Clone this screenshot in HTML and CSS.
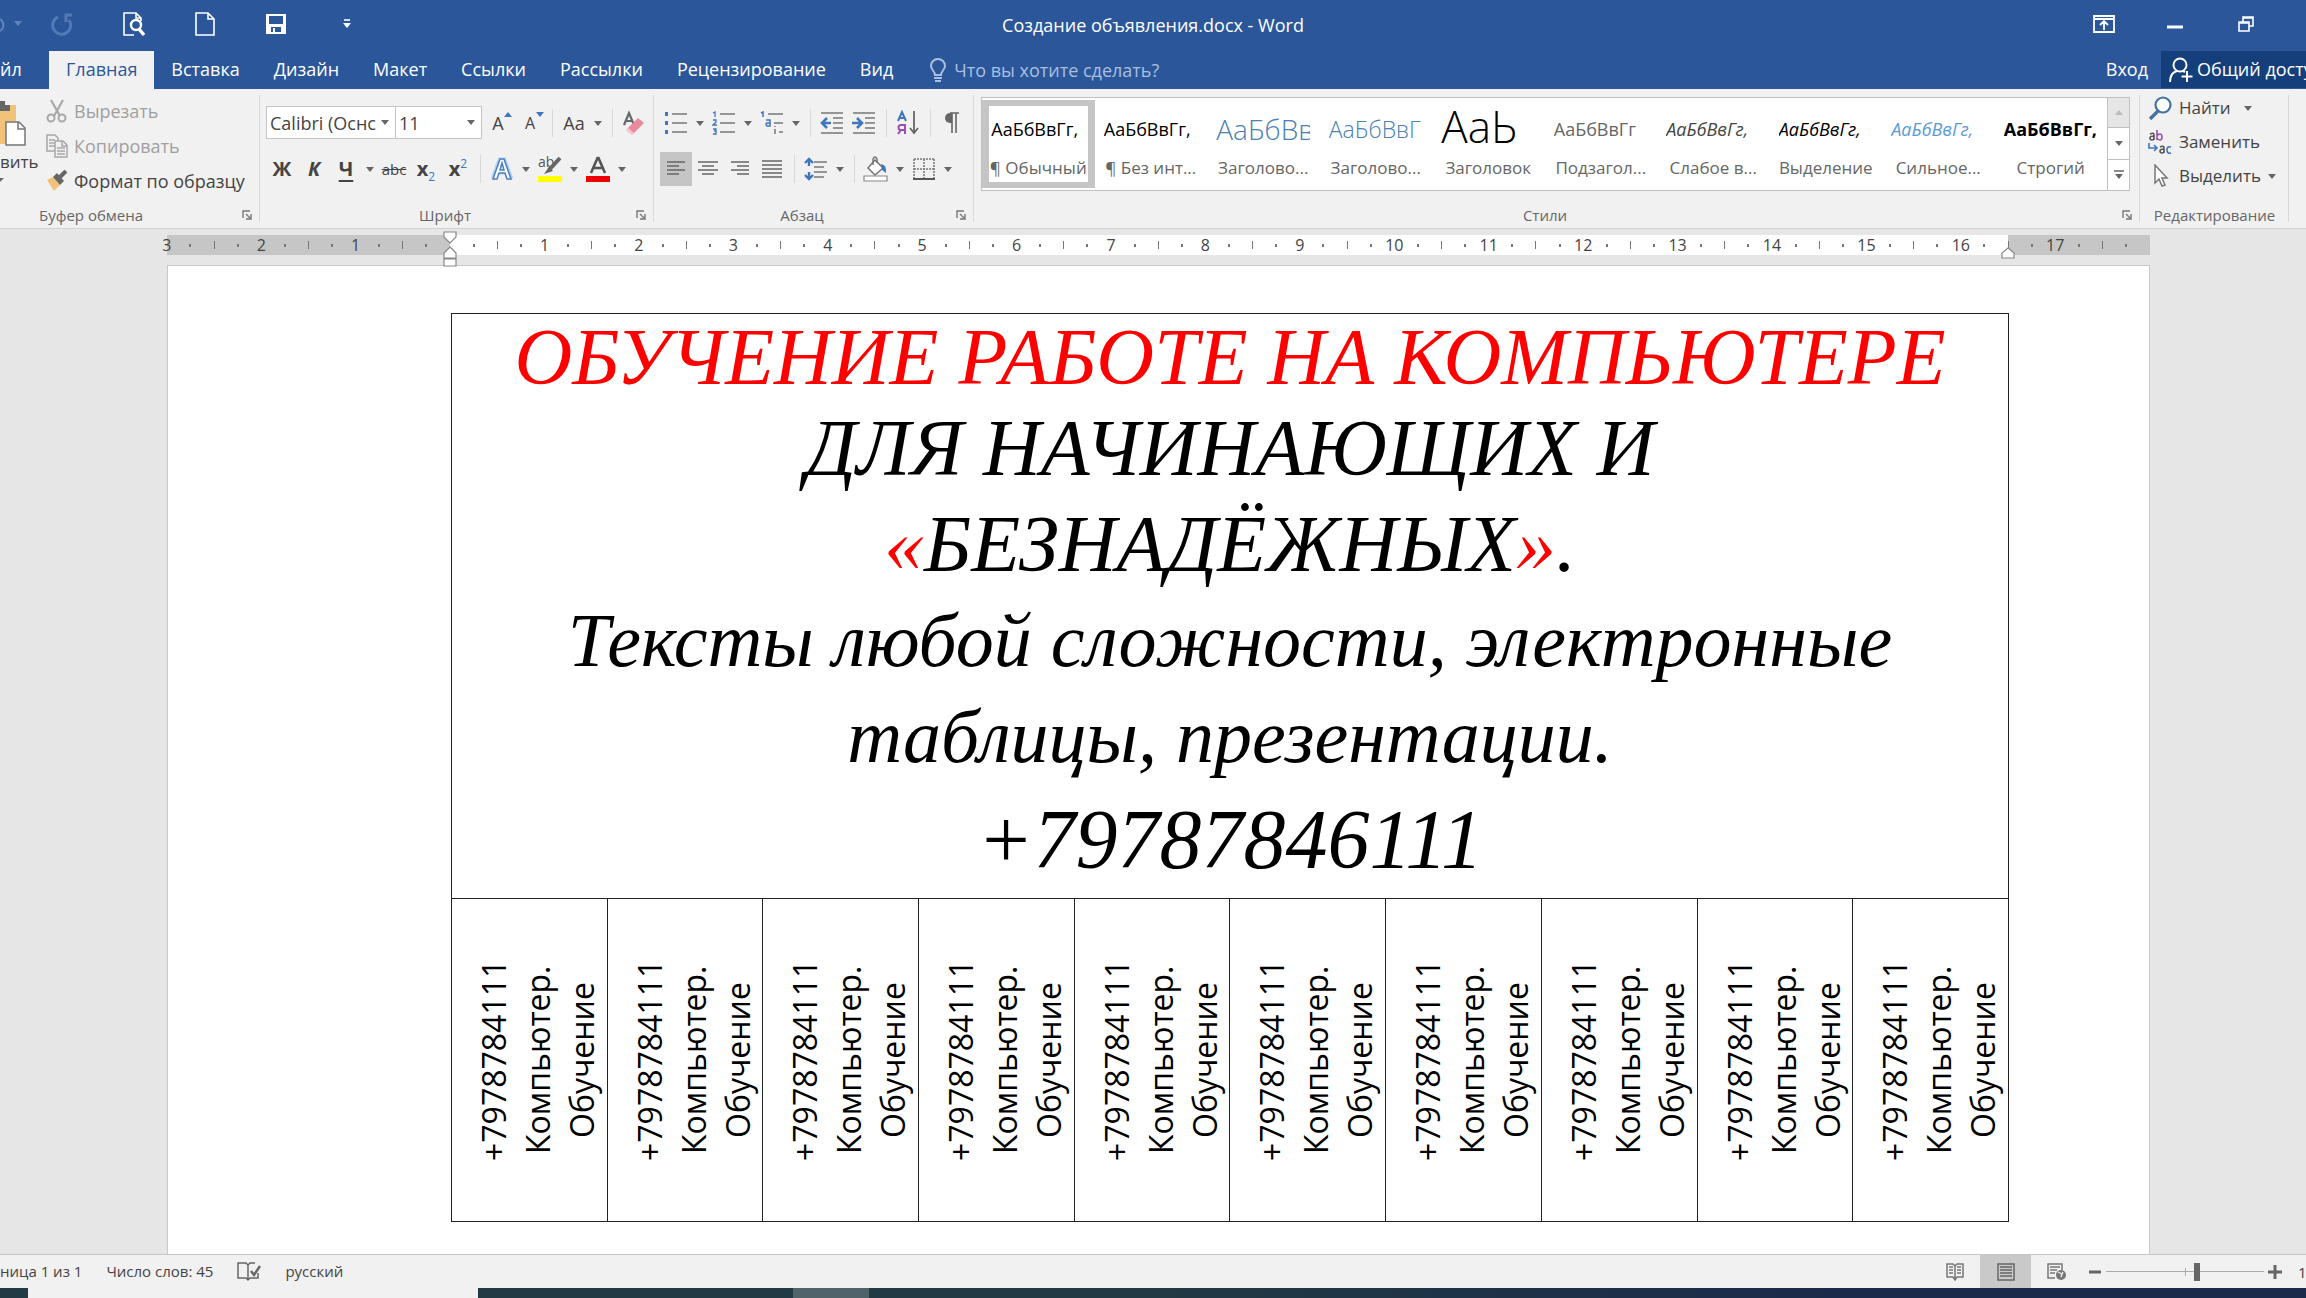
FILE: index.html
```html
<!DOCTYPE html>
<html lang="ru">
<head>
<meta charset="utf-8">
<meta name="viewport" content="width=device-width, initial-scale=1">
<title>Создание объявления.docx - Word</title>
<link rel="stylesheet" href="styles.css">
</head>
<body>
<header class="titlebar">
  <div class="quick">
    <button class="quick-undo" aria-label="Отменить"><svg width="28" height="24" viewBox="0 0 28 24"><path d="M0 7a7 7 0 0 1 0 12" fill="none" stroke="#5f83bd" stroke-width="2"/><path d="M14 9h8l-4 5z" fill="#5f83bd"/></svg></button>
    <button class="quick-btn" aria-label="Повторить"><svg width="24" height="24" viewBox="0 0 24 24"><path d="M7 5a9 9 0 1 0 11 3M21 3h-6v7" fill="none" stroke="#5379b6" stroke-width="3"/></svg></button>
    <button class="quick-btn" aria-label="Предварительный просмотр"><svg width="24" height="26" viewBox="0 0 24 26"><path d="M12 24H2V2h12l5 5v3M14 2v5h5" fill="none" stroke="#fff" stroke-width="1.6"/><circle cx="14" cy="14" r="5" fill="#2b579a" stroke="#fff" stroke-width="2.4"/><path d="M17 18l5 6" stroke="#fff" stroke-width="3.4"/></svg></button>
    <button class="quick-btn" aria-label="Создать"><svg width="22" height="26" viewBox="0 0 22 26"><path d="M2 2h12l6 6v16H2zM14 2v6h6" fill="none" stroke="#fff" stroke-width="1.6"/></svg></button>
    <button class="quick-btn" aria-label="Сохранить"><svg width="22" height="22" viewBox="0 0 22 22"><path fill-rule="evenodd" fill="#fff" d="M1 1h20v20H1zM4 3v8h14V3zM6 14v5h2v-4h2v4h6v-5z"/></svg></button>
    <button class="quick-btn" aria-label="Настройка панели"><svg width="8" height="10" viewBox="0 0 8 10"><path d="M1 1h6" stroke="#fff" stroke-width="1.6"/><path d="M0 4h8L4 9z" fill="#fff"/></svg></button>
  </div>
  <h1 class="doc-title">Создание объявления.docx - Word</h1>
  <div class="window-controls">
    <button class="quick-btn" aria-label="Параметры отображения ленты"><svg width="22" height="18" viewBox="0 0 22 18"><path d="M1 1h20v16H1zM1 4h20M11 15V7M7 10l4-4 4 4" fill="none" stroke="#fff" stroke-width="1.8"/></svg></button>
    <button class="quick-btn" aria-label="Свернуть"><svg width="16" height="18" viewBox="0 0 16 18"><path d="M0 12h16" stroke="#fff" stroke-width="3"/></svg></button>
    <button class="quick-btn" aria-label="Свернуть в окно"><svg width="16" height="18" viewBox="0 0 16 18"><path d="M1 7h10v9H1zM1 8h10M5 7V2h10v9h-4M5 3h10" fill="none" stroke="#fff" stroke-width="1.6"/></svg></button>
  </div>
</header>

<nav class="tabs">
  <a class="tab tab-file" href="#">йл</a>
  <a class="tab tab-active" href="#">Главная</a>
  <a class="tab" href="#">Вставка</a>
  <a class="tab" href="#">Дизайн</a>
  <a class="tab" href="#">Макет</a>
  <a class="tab" href="#">Ссылки</a>
  <a class="tab" href="#">Рассылки</a>
  <a class="tab" href="#">Рецензирование</a>
  <a class="tab" href="#">Вид</a>
  <label class="tell-me">
    <svg width="16" height="24" viewBox="0 0 16 24"><path d="M5 17c0-4-4-5-4-9a7 7 0 0 1 14 0c0 4-4 5-4 9z" fill="none" stroke="#a9bfe0" stroke-width="2"/><path d="M4 20h8M5 23h6" stroke="#a9bfe0" stroke-width="2"/></svg>
    <input type="text" placeholder="Что вы хотите сделать?" aria-label="Что вы хотите сделать?">
  </label>
  <a class="sign-in" href="#">Вход</a>
  <button class="share"><svg width="24" height="26" viewBox="0 0 24 26"><circle cx="11" cy="8" r="6.500" fill="none" stroke="#fff" stroke-width="2"/><path d="M1 25c0-6 3-10 7-11M14 14l2 1M18 14v11M12.500 19.500h11" fill="none" stroke="#fff" stroke-width="2"/></svg>Общий доступ</button>
</nav>

<section class="ribbon">
  <div class="group group-clipboard">
    <div class="group-body clipboard">
      <button class="paste">
        <svg width="28" height="46" viewBox="0 0 28 46"><path d="M0 5h16v39H0z" fill="#f0c27a"/><path d="M0 1h5v4h5v6H0z" fill="#666"/><path d="M6 22h13l6 6v17H6z" fill="#fff" stroke="#777" stroke-width="1.500"/><path d="M18 22v7h7" fill="none" stroke="#777" stroke-width="1.500"/></svg>
        <span>вить</span>
        <svg width="4" height="6" viewBox="0 0 4 6"><path d="M0 0h4L0 4z" fill="#666"/></svg>
      </button>
      <div class="stack">
        <button class="command muted"><svg width="22" height="24" viewBox="0 0 22 24"><path d="M5 1l9 16M17 1L8 17" stroke="#a8a8a8" stroke-width="2.200"/><circle cx="5" cy="19" r="3.500" fill="none" stroke="#a8a8a8" stroke-width="2"/><circle cx="16" cy="19" r="3.500" fill="none" stroke="#a8a8a8" stroke-width="2"/></svg>Вырезать</button>
        <button class="command muted"><svg width="22" height="24" viewBox="0 0 22 24"><path d="M1 1h8l3 3v13H1zM3 6h6M3 9h6M3 12h6" fill="#f1f1f1" stroke="#a8a8a8" stroke-width="1.500"/><path d="M9 7h8l4 4v12H9zM16 7v5h5M11 14h8M11 17h8M11 20h8" fill="#f1f1f1" stroke="#a8a8a8" stroke-width="1.500"/></svg>Копировать</button>
        <button class="command"><svg width="22" height="22" viewBox="0 0 22 22"><path d="M1 10l6-3 7 8-6 6z" fill="#f0c27a"/><path d="M7 7l4-4 7 8-4 4z" fill="#666"/><path d="M14 7l6-6" stroke="#666" stroke-width="4"/></svg>Формат по образцу</button>
      </div>
    </div>
    <div class="group-label"><span>Буфер обмена</span><button class="launcher" aria-label="Буфер обмена: параметры"><svg width="10" height="10" viewBox="0 0 10 10"><path d="M1 8V1h7M4 4l4 4M9 4v5H4" fill="none" stroke="#777" stroke-width="1.400"/></svg></button></div>
  </div>

  <div class="group group-font">
    <div class="group-body rows">
      <div class="row">
        <span class="combo combo-font"><select aria-label="Шрифт"><option>Calibri (Оснс</option></select></span>
        <span class="combo combo-size"><select aria-label="Размер шрифта"><option>11</option></select></span>
        <button class="tool" aria-label="Увеличить размер"><span class="letter">A</span><svg class="corner" width="8" height="5" viewBox="0 0 8 5"><path d="M0 5h8L4 0z" fill="#3f76bd"/></svg></button>
        <button class="tool" aria-label="Уменьшить размер"><span class="letter letter-small">A</span><svg class="corner" width="8" height="5" viewBox="0 0 8 5"><path d="M0 0h8L4 5z" fill="#3f76bd"/></svg></button>
        <i class="sep"></i>
        <button class="tool split"><span class="letter">Aa</span></button>
        <i class="sep"></i>
        <button class="tool" aria-label="Очистить форматирование"><svg width="24" height="26" viewBox="0 0 24 26"><path d="M2 15L7 3l5 12M4 11h6" fill="none" stroke="#666" stroke-width="2.200"/><path d="M5 19L16 8l6 5-11 11z" fill="#e8899c"/><path d="M5 19l6 5" stroke="#f6c3cd" stroke-width="3"/></svg></button>
      </div>
      <div class="row">
        <button class="tool glyph bold">Ж</button>
        <button class="tool glyph bold italic">К</button>
        <button class="tool split glyph bold"><span class="underline">Ч</span></button>
        <button class="tool glyph-small"><s>abc</s></button>
        <button class="tool glyph bold"><span>x<sub>2</sub></span></button>
        <button class="tool glyph bold"><span>x<sup>2</sup></span></button>
        <i class="sep"></i>
        <button class="tool split" aria-label="Текстовые эффекты"><svg width="22" height="24" viewBox="0 0 22 24"><path d="M2 22L9 3h4l7 19M6 15h10" fill="none" stroke="#b9d1ee" stroke-width="5"/><path d="M2 22L9 2h4l7 20h-4l-2-6H8l-2 6zM9 13h4l-2-7z" fill="#fff" stroke="#4a80c4" stroke-width="1.500"/></svg></button>
        <button class="tool split" aria-label="Цвет выделения"><svg width="26" height="28" viewBox="0 0 26 28"><text x="1" y="12" font-size="14" font-family="Open Sans" fill="#555">ab</text><path d="M23 3L12 15" stroke="#666" stroke-width="4"/><path d="M12 12l4 4-9 3z" fill="#666"/><path d="M1 21h24v6H1z" fill="#ff0"/></svg></button>
        <button class="tool split" aria-label="Цвет текста"><svg width="26" height="28" viewBox="0 0 26 28"><path d="M6 18L12.500 3h1L20 18M8.500 13h9" fill="none" stroke="#555" stroke-width="2.600"/><path d="M1 21h24v6H1z" fill="#ee0000"/></svg></button>
      </div>
    </div>
    <div class="group-label"><span>Шрифт</span><button class="launcher" aria-label="Шрифт: параметры"><svg width="10" height="10" viewBox="0 0 10 10"><path d="M1 8V1h7M4 4l4 4M9 4v5H4" fill="none" stroke="#777" stroke-width="1.400"/></svg></button></div>
  </div>

  <div class="group group-para">
    <div class="group-body rows">
      <div class="row">
        <button class="tool split" aria-label="Маркеры"><svg width="24" height="24" viewBox="0 0 24 24"><path d="M8 3h15M8 12h15M8 21h15" stroke="#777" stroke-width="1.600"/><path d="M1 1h3v4H1zM1 10h3v4H1zM1 19h3v4H1z" fill="#3f76bd"/></svg></button>
        <button class="tool split" aria-label="Нумерация"><svg width="24" height="24" viewBox="0 0 24 24"><path d="M8 3h15M8 12h15M8 21h15" stroke="#777" stroke-width="1.600"/><path d="M1 2l2-1v5M1 9h3v2l-3 3h4M1 18h3v5H1M2 20h2" fill="none" stroke="#3f76bd" stroke-width="1.300"/></svg></button>
        <button class="tool split" aria-label="Многоуровневый список"><svg width="24" height="24" viewBox="0 0 24 24"><path d="M8 3h15M14 12h9M19 21h4" stroke="#777" stroke-width="1.600"/><path d="M1 2l2-1v5" fill="none" stroke="#3f76bd" stroke-width="1.500"/><path d="M6 9h4v6H7q-2-2 0-3h3" fill="none" stroke="#3f76bd" stroke-width="1.500"/><path d="M15 18v5M15 15v1" stroke="#777" stroke-width="1.500"/></svg></button>
        <i class="sep"></i>
        <button class="tool" aria-label="Уменьшить отступ"><svg width="24" height="24" viewBox="0 0 24 24"><path d="M1 2h22M13 7h10M13 12h10M13 17h10M1 22h22" stroke="#777" stroke-width="1.600"/><path d="M11 12H3M7 7l-5 5 5 5" fill="none" stroke="#3f76bd" stroke-width="2.600"/></svg></button>
        <button class="tool" aria-label="Увеличить отступ"><svg width="24" height="24" viewBox="0 0 24 24"><path d="M1 2h22M13 7h10M13 12h10M13 17h10M1 22h22" stroke="#777" stroke-width="1.600"/><path d="M0 12h9M5 7l5 5-5 5" fill="none" stroke="#3f76bd" stroke-width="2.600"/></svg></button>
        <i class="sep"></i>
        <button class="tool" aria-label="Сортировка"><svg width="24" height="26" viewBox="0 0 24 26"><path d="M2 11L6 2l4 9M3 8h6" fill="none" stroke="#3f76bd" stroke-width="2"/><path d="M9 24V15H5a2.500 2.500 0 0 0 0 5h4M5 20l-3 4" fill="none" stroke="#9a4fb0" stroke-width="2"/><path d="M18 1v22M14 18l4 5 4-5" fill="none" stroke="#666" stroke-width="1.800"/></svg></button>
        <i class="sep"></i>
        <button class="tool" aria-label="Непечатаемые знаки"><svg width="16" height="22" viewBox="0 0 16 22"><path d="M8 1v20M12 1v20M6 1h9" fill="none" stroke="#666" stroke-width="1.600"/><path d="M8 1H6a5 5 0 0 0 0 10h2z" fill="#666"/></svg></button>
      </div>
      <div class="row">
        <button class="tool pressed" aria-label="По левому краю"><svg width="20" height="18" viewBox="0 0 20 18"><path d="M1 2h18M1 6h12M1 10h18M1 14h12" stroke="#666" stroke-width="1.500"/></svg></button>
        <button class="tool" aria-label="По центру"><svg width="20" height="18" viewBox="0 0 20 18"><path d="M0 2h20M4 6h12M0 10h20M4 14h12" stroke="#666" stroke-width="1.500"/></svg></button>
        <button class="tool" aria-label="По правому краю"><svg width="20" height="18" viewBox="0 0 20 18"><path d="M1 2h18M7 6h12M1 10h18M7 14h12" stroke="#666" stroke-width="1.500"/></svg></button>
        <button class="tool" aria-label="По ширине"><svg width="20" height="20" viewBox="0 0 20 20"><path d="M0 2h20M0 6h20M0 10h20M0 14h20M0 18h20" stroke="#666" stroke-width="1.500"/></svg></button>
        <i class="sep"></i>
        <button class="tool split" aria-label="Интервал"><svg width="24" height="24" viewBox="0 0 24 24"><path d="M10 5h13M10 10h10M10 15h13M10 20h10" stroke="#777" stroke-width="1.600"/><path d="M5 2v7M5 15v7M1 6l4-4 4 4M1 18l4 4 4-4" fill="none" stroke="#3f76bd" stroke-width="2.400"/></svg></button>
        <i class="sep"></i>
        <button class="tool split" aria-label="Заливка"><svg width="26" height="26" viewBox="0 0 26 26"><path d="M12 4l8 8-8 7-7-7z" fill="#fff" stroke="#777" stroke-width="1.500"/><path d="M10 9V3q2-4 4 0v4" fill="none" stroke="#777" stroke-width="1.500"/><path d="M18 8q6 1 5 9l-4-3z" fill="#3f76bd"/><path d="M1 20h23v5H1z" fill="#fff" stroke="#888" stroke-width="1.200"/></svg></button>
        <button class="tool split" aria-label="Границы"><svg width="22" height="22" viewBox="0 0 22 22"><path d="M1 1h20M1 1v20M21 1v20M11 1v20M1 11h20" fill="none" stroke="#777" stroke-width="1.500" stroke-dasharray="2 1"/><path d="M0 21h22" stroke="#555" stroke-width="2"/></svg></button>
      </div>
    </div>
    <div class="group-label"><span>Абзац</span><button class="launcher" aria-label="Абзац: параметры"><svg width="10" height="10" viewBox="0 0 10 10"><path d="M1 8V1h7M4 4l4 4M9 4v5H4" fill="none" stroke="#777" stroke-width="1.400"/></svg></button></div>
  </div>

  <div class="group group-styles">
    <div class="group-body gallery-wrap">
      <div class="gallery">
        <button class="style style-selected"><span class="sample">АаБбВвГг,</span><span class="style-name">¶ Обычный</span></button>
        <button class="style"><span class="sample">АаБбВвГг,</span><span class="style-name">¶ Без инт...</span></button>
        <button class="style"><span class="sample sample-h1">АаБбВв</span><span class="style-name">Заголово...</span></button>
        <button class="style"><span class="sample sample-h2">АаБбВвГ</span><span class="style-name">Заголово...</span></button>
        <button class="style"><span class="sample sample-title">АаЬ</span><span class="style-name">Заголовок</span></button>
        <button class="style"><span class="sample sample-sub">АаБбВвГг</span><span class="style-name">Подзагол...</span></button>
        <button class="style"><span class="sample italic soft">АаБбВвГг,</span><span class="style-name">Слабое в...</span></button>
        <button class="style"><span class="sample italic">АаБбВвГг,</span><span class="style-name">Выделение</span></button>
        <button class="style"><span class="sample italic blue">АаБбВвГг,</span><span class="style-name">Сильное...</span></button>
        <button class="style"><span class="sample bold">АаБбВвГг,</span><span class="style-name">Строгий</span></button>
      </div>
      <div class="gallery-nav">
        <button class="nav-off" aria-label="Вверх"><svg width="8" height="5" viewBox="0 0 8 5"><path d="M0 5h8L4 0z" fill="#bbb"/></svg></button>
        <button aria-label="Вниз"><svg width="8" height="5" viewBox="0 0 8 5"><path d="M0 0h8L4 5z" fill="#666"/></svg></button>
        <button aria-label="Дополнительно"><svg width="10" height="9" viewBox="0 0 10 9"><path d="M0 1h10" stroke="#666" stroke-width="1.500"/><path d="M1 4h8L5 9z" fill="#666"/></svg></button>
      </div>
    </div>
    <div class="group-label"><span>Стили</span><button class="launcher" aria-label="Стили: параметры"><svg width="10" height="10" viewBox="0 0 10 10"><path d="M1 8V1h7M4 4l4 4M9 4v5H4" fill="none" stroke="#777" stroke-width="1.400"/></svg></button></div>
  </div>

  <div class="group group-edit">
    <div class="group-body stack">
      <button class="command"><svg width="24" height="24" viewBox="0 0 24 24"><circle cx="15" cy="9" r="7.500" fill="#fff" stroke="#44739f" stroke-width="2.200"/><path d="M10 15l-8 8" stroke="#44739f" stroke-width="3.400"/></svg>Найти<i class="caret caret-far"></i></button>
      <button class="command"><svg width="24" height="26" viewBox="0 0 24 26"><g fill="none" stroke="#555" stroke-width="1.600"><path d="M2 5q4-2 4 1v5M6 7q-4 0-4 2t2 2 2-2"/><path d="M12 18q4-2 4 1v5M16 20q-4 0-4 2t2 2 2-2"/><path d="M9 1v10M9 7q1-2 3-2t2 3-2 3-3-2" stroke="#9a4fb0"/><path d="M23 18q-4-1-4 3t4 3" stroke="#3f76bd"/><path d="M1 14v5h8M6 16l3 3-3 3" stroke="#3f76bd"/></g></svg>Заменить</button>
      <button class="command"><svg width="24" height="24" viewBox="0 0 24 24"><path d="M7 1v18l4-4 3 7 3-1-3-7h5z" fill="#fff" stroke="#777" stroke-width="1.500"/></svg>Выделить<i class="caret"></i></button>
    </div>
    <div class="group-label label-plain"><span>Редактирование</span></div>
  </div>
</section>

<main class="workspace">
  <div class="ruler">
    <ol class="ticks">
      <li><b>3</b><i></i><i class="half"></i><i></i></li>
      <li><b>2</b><i></i><i class="half"></i><i></i></li>
      <li><b>1</b><i></i><i class="half"></i><i></i></li>
      <li><b></b><i></i><i class="half"></i><i></i></li>
      <li><b>1</b><i></i><i class="half"></i><i></i></li>
      <li><b>2</b><i></i><i class="half"></i><i></i></li>
      <li><b>3</b><i></i><i class="half"></i><i></i></li>
      <li><b>4</b><i></i><i class="half"></i><i></i></li>
      <li><b>5</b><i></i><i class="half"></i><i></i></li>
      <li><b>6</b><i></i><i class="half"></i><i></i></li>
      <li><b>7</b><i></i><i class="half"></i><i></i></li>
      <li><b>8</b><i></i><i class="half"></i><i></i></li>
      <li><b>9</b><i></i><i class="half"></i><i></i></li>
      <li><b>10</b><i></i><i class="half"></i><i></i></li>
      <li><b>11</b><i></i><i class="half"></i><i></i></li>
      <li><b>12</b><i></i><i class="half"></i><i></i></li>
      <li><b>13</b><i></i><i class="half"></i><i></i></li>
      <li><b>14</b><i></i><i class="half"></i><i></i></li>
      <li><b>15</b><i></i><i class="half"></i><i></i></li>
      <li><b>16</b><i></i><i class="half"></i><i></i></li>
      <li><b>17</b><i></i><i class="half"></i><i></i></li>
    </ol>
    <svg class="marker marker-left" width="14" height="36" viewBox="0 0 14 36"><path d="M1 1h12v5l-6 6-6-6zM7 16l6 6v5H1v-5zM1 28h12v7H1z" fill="#fff" stroke="#888" stroke-width="1.200"/></svg>
    <svg class="marker marker-right" width="14" height="12" viewBox="0 0 14 12"><path d="M7 1l6 5v5H1V6z" fill="#fff" stroke="#888" stroke-width="1.200"/></svg>
  </div>

  <article class="page">
    <table class="flyer">
      <tbody>
        <tr>
          <td class="announce" colspan="10">
            <p class="caps lead red">ОБУЧЕНИЕ РАБОТЕ НА КОМПЬЮТЕРЕ</p>
            <p class="caps">ДЛЯ НАЧИНАЮЩИХ И</p>
            <p class="caps"><span class="red">«</span>БЕЗНАДЁЖНЫХ<span class="red">»</span>.</p>
            <p>Тексты любой сложности, электронные</p>
            <p>таблицы, презентации.</p>
            <p class="phone">+79787846111</p>
          </td>
        </tr>
        <tr class="strips">
          <td><div class="strip">+7978784111<br>Компьютер.<br>Обучение</div></td>
          <td><div class="strip">+7978784111<br>Компьютер.<br>Обучение</div></td>
          <td><div class="strip">+7978784111<br>Компьютер.<br>Обучение</div></td>
          <td><div class="strip">+7978784111<br>Компьютер.<br>Обучение</div></td>
          <td><div class="strip">+7978784111<br>Компьютер.<br>Обучение</div></td>
          <td><div class="strip">+7978784111<br>Компьютер.<br>Обучение</div></td>
          <td><div class="strip">+7978784111<br>Компьютер.<br>Обучение</div></td>
          <td><div class="strip">+7978784111<br>Компьютер.<br>Обучение</div></td>
          <td><div class="strip">+7978784111<br>Компьютер.<br>Обучение</div></td>
          <td><div class="strip">+7978784111<br>Компьютер.<br>Обучение</div></td>
        </tr>
      </tbody>
    </table>
  </article>
</main>

<footer class="status">
  <span>ница 1 из 1</span>
  <span>Число слов: 45</span>
  <svg width="24" height="20" viewBox="0 0 24 20"><path d="M11 3L9 1H1v15h8l2 2 2-2h8v-5M11 3v15M11 3l2-2h5" fill="none" stroke="#666" stroke-width="1.500"/><path d="M14 9l3 4 6-9" fill="none" stroke="#666" stroke-width="2.400"/></svg>
  <span>русский</span>
  <div class="views">
    <button class="view" aria-label="Режим чтения"><svg width="18" height="18" viewBox="0 0 18 18"><path d="M9 3L7 1H1v13h6l2 3 2-3h6V1h-6zM9 3v13M3 4h4M3 7h4M3 10h4M11 4h4M11 7h4M11 10h4" fill="none" stroke="#777" stroke-width="1.500"/></svg></button>
    <button class="view view-on" aria-label="Разметка страницы"><svg width="18" height="18" viewBox="0 0 18 18"><path d="M1 1h16v16H1zM3 4h12M3 7h12M3 10h12M3 13h12" fill="none" stroke="#666" stroke-width="1.500"/></svg></button>
    <button class="view" aria-label="Веб-документ"><svg width="20" height="18" viewBox="0 0 20 18"><path d="M8 15H1V1h14v6M3 4h10M3 7h7M3 10h5" fill="none" stroke="#777" stroke-width="1.500"/><circle cx="14" cy="12" r="5" fill="#777"/><path d="M11 9l4 2-1 3M16 9l-1 2" fill="none" stroke="#f1f1f1" stroke-width="1.300"/></svg></button>
  </div>
  <div class="zoom">
    <button aria-label="Уменьшить"><svg width="14" height="14" viewBox="0 0 14 14"><path d="M1 7h12" stroke="#666" stroke-width="3"/></svg></button>
    <input type="range" min="0" max="100" value="58" aria-label="Масштаб">
    <button aria-label="Увеличить"><svg width="14" height="14" viewBox="0 0 14 14"><path d="M0 7h14M7 0v14" stroke="#666" stroke-width="3"/></svg></button>
    <span>1</span>
  </div>
</footer>
<div class="taskbar"><div class="task-search"></div><div class="task-active"></div></div>
</body>
</html>
```
FILE: styles.css
```css
* { box-sizing: border-box; }

body {
  margin: 0;
  height: 100vh;
  display: flex;
  flex-direction: column;
  overflow: hidden;
  background: #e6e6e6;
  color: #444;
  font: 17px/24px "Open Sans", "Noto Sans", sans-serif;
}

button, input, select { font: inherit; color: inherit; border: 0; background: none; padding: 0; margin: 0; }
button { display: flex; align-items: center; justify-content: center; white-space: nowrap; }
svg { display: block; flex: none; }
a { color: inherit; text-decoration: none; }
.bold { font-weight: 700; }
.italic { font-style: italic; }
.red { color: #f00; }

/* Title bar */
.titlebar {
  display: grid;
  grid-template-columns: 1fr auto 1fr;
  flex: none;
  height: 51px;
  background: #2b579a;
  color: #fff;
}
.quick, .window-controls { display: flex; height: 48px; }
.window-controls { justify-content: flex-end; padding-right: 25px; }
.quick-undo { width: 27px; }
.quick-btn { width: 71px; }
.doc-title { margin: 0; font-size: 18px; font-weight: 400; line-height: 50px; }

/* Ribbon tabs */
.tabs { display: flex; flex: none; height: 38px; background: #2b579a; color: #fff; font-size: 18px; line-height: 37px; }
.tab { padding: 0 17px; }
.tab-file { width: 49px; padding: 0; }
.tab-active { background: #f1f1f1; color: #2b579a; }
.tell-me { display: flex; align-items: center; gap: 8px; flex: 1; padding-left: 20px; }
.tell-me input { width: 240px; color: #a9bfe0; }
.tell-me input::placeholder { color: #a9bfe0; opacity: 1; }
.sign-in { padding-right: 13px; }
.share { justify-content: flex-start; gap: 4px; width: 145px; height: 37px; padding-left: 8px; background: #153f7a; overflow: hidden; }

/* Ribbon */
.ribbon { display: flex; flex: none; height: 140px; padding-right: 17px; background: #f1f1f1; border-bottom: 1px solid #d2d2d2; }
.group { display: flex; flex-direction: column; position: relative; }
.group::after { content: ""; position: absolute; right: 0; top: 6px; bottom: 6px; width: 1px; background: #d8d8d8; }
.group-body { flex: 1; }
.group-label { display: flex; align-items: center; height: 25px; padding: 0 8px 2px 0; font-size: 15px; color: #666; }
.group-label span { flex: 1; padding-right: 6px; text-align: center; }
.label-plain { padding-right: 0; }
.label-plain span { padding-right: 0; }
.group-clipboard { width: 260px; }
.group-clipboard .group-label span { padding: 0 0 0 39px; text-align: left; }
.group-font { width: 394px; }
.group-para { width: 320px; }
.group-styles { flex: 1; min-width: 0; }
.group-edit { width: 149px; }

.clipboard { display: flex; gap: 8px; padding-top: 4px; font-size: 18px; }
.paste { flex-direction: column; justify-content: flex-start; align-items: flex-start; width: 38px; padding-top: 7px; gap: 4px; font-size: 17px; }
.stack { display: flex; flex-direction: column; }
.command { justify-content: flex-start; gap: 6px; height: 35px; }
.muted { color: #a0a0a0; }
.group-edit .stack { padding: 2px 0 0 8px; }
.group-edit .command { gap: 7px; height: 34px; }
.caret { width: 0; height: 0; border: 4px solid transparent; border-top: 5px solid #666; border-bottom: 0; }
.caret-far { margin-left: 6px; }

.rows { display: flex; flex-direction: column; gap: 12px; padding: 17px 0 0 6px; }
.row { display: flex; height: 34px; }
.tool { position: relative; width: 32px; height: 34px; flex: none; }
.split { width: 48px; padding-right: 16px; }
.split::after {
  content: "";
  position: absolute;
  right: 4px;
  top: 15px;
  border: 4px solid transparent;
  border-top: 5px solid #666;
  border-bottom: 0;
}
.pressed { background: #c5c5c5; }
.sep { width: 12px; flex: none; background: linear-gradient(#d8d8d8, #d8d8d8) center / 1px 28px no-repeat; }
.letter { font-size: 18px; }
.letter-small { font-size: 16px; }
.corner { position: absolute; right: 2px; top: 6px; }
.glyph { font-size: 20px; }
.glyph-small { font-size: 15px; }
.underline { text-decoration: underline; text-underline-offset: 4px; }
.glyph sub, .glyph sup { font-size: 12px; line-height: 0; color: #3f76bd; font-weight: 400; }

.combo { position: relative; height: 33px; border: 1px solid #c6c6c6; background: #fff; }
.combo-font { width: 130px; }
.combo-size { width: 86px; border-left: 0; }
.combo select { appearance: none; width: 100%; height: 31px; padding: 0 14px 0 3px; background: transparent; font-size: 18px; }
.combo::after {
  content: "";
  position: absolute;
  right: 6px;
  top: 13px;
  border: 4px solid transparent;
  border-top: 5px solid #666;
  border-bottom: 0;
  pointer-events: none;
}

/* Style gallery */
.gallery-wrap { display: flex; align-items: flex-start; padding: 8px 10px 0 7px; }
.gallery { display: grid; grid-template-columns: repeat(10, minmax(0, 1fr)); flex: 1; height: 94px; padding: 2px 0; border: 1px solid #c0c0c0; background: #fff; }
.style { flex-direction: column; justify-content: flex-end; height: 88px; padding: 0 9px 7px; border: 0 solid #c5c5c5; overflow: hidden; }
.style-selected { padding: 0 2px 1px; border-width: 6px 7px; }
.sample { display: flex; align-items: center; width: 94px; height: 40px; overflow: hidden; color: #000; font-size: 18px; line-height: 40px; }
.style-name { margin-top: 6px; color: #666; line-height: 26px; }
.sample-h1 { color: #4a80b4; font-size: 28px; font-weight: 300; }
.sample-h2 { color: #4a80b4; font-size: 23px; font-weight: 300; }
.sample-title { height: 46px; font-size: 44px; font-weight: 300; }
.sample-sub { color: #666; }
.soft { color: #444; }
.blue { color: #5b9bd5; }
.gallery-nav { display: grid; grid-template-rows: repeat(3, 1fr); width: 22px; height: 94px; }
.gallery-nav button { border: 1px solid #c0c0c0; border-left: 0; border-top-width: 0; background: #fff; }
.gallery-nav .nav-off { border-top-width: 1px; background: #e6e6e6; }

/* Document area */
.workspace { flex: 1; min-height: 0; padding: 6px 156px 0 167px; overflow: hidden; }
.ruler {
  position: relative;
  height: 20px;
  background: linear-gradient(90deg, #c6c6c6 14.286%, #fff 14.286%, #fff 92.857%, #c6c6c6 92.857%);
}
.ticks { display: flex; height: 20px; margin: 0 12px 0 -12px; padding: 0; list-style: none; font-size: 16px; line-height: 20px; }
.ticks li { display: flex; align-items: center; flex: 1; }
.ticks b, .ticks i { display: flex; justify-content: center; flex: 1 1 0; width: 0; font-weight: 400; }
.ticks i::after { content: ""; width: 2px; height: 3px; background: #777; }
.ticks .half::after { width: 1px; height: 8px; }
.marker { position: absolute; transform: translateX(-50%); }
.marker-left { left: 14.286%; top: -4px; }
.marker-right { left: 92.857%; top: 12px; }

.page { height: 100%; margin-top: 10px; padding: 47px 140px 0 283px; background: #fff; border: 1px solid #c9c9c9; border-width: 1px 1px 0; }
.flyer { width: 100%; table-layout: fixed; border-collapse: collapse; color: #000; }
.flyer td { padding: 0; border: 1px solid #222; }
.announce { height: 585px; text-align: center; vertical-align: top; font: italic 76px/96px "Liberation Serif", serif; }
.announce p { margin: 0; white-space: nowrap; }
.announce .caps { font-size: 80px; }
.announce .lead { line-height: 86px; }
.announce .phone { font-size: 84px; line-height: 112px; }
.strips td { height: 323px; }
.strip {
  width: 132px;
  height: 320px;
  margin: 0 0 0 20px;
  writing-mode: vertical-rl;
  transform: rotate(180deg);
  text-align: center;
  font-size: 32px;
  line-height: 44px;
}

/* Status bar */
.status { position: relative; display: flex; align-items: center; gap: 24px; flex: none; height: 34px; background: #f1f1f1; border-top: 1px solid #c6c6c6; font-size: 15px; line-height: 20px; }
.status > span { height: 22px; }
.views { display: flex; margin-left: auto; }
.view { width: 51px; height: 33px; }
.view-on { background: #c9c9c9; }
.zoom { display: flex; align-items: center; gap: 4px; margin-left: -18px; }
.zoom span { width: 8px; margin-left: 12px; overflow: hidden; }
.zoom input { appearance: none; width: 158px; height: 20px; background: linear-gradient(#aaa, #aaa) center / 100% 1px no-repeat, linear-gradient(#aaa, #aaa) center / 1px 8px no-repeat; }
.zoom input::-webkit-slider-thumb { appearance: none; width: 6px; height: 18px; background: #666; }

.taskbar { display: flex; flex: none; height: 10px; padding-left: 28px; background: linear-gradient(90deg, #223a44 50%, #1b2a4a 80%); }
.task-search { width: 450px; background: #f1f1f1; }
.task-active { width: 76px; margin-left: 315px; background: #50636b; }
```
